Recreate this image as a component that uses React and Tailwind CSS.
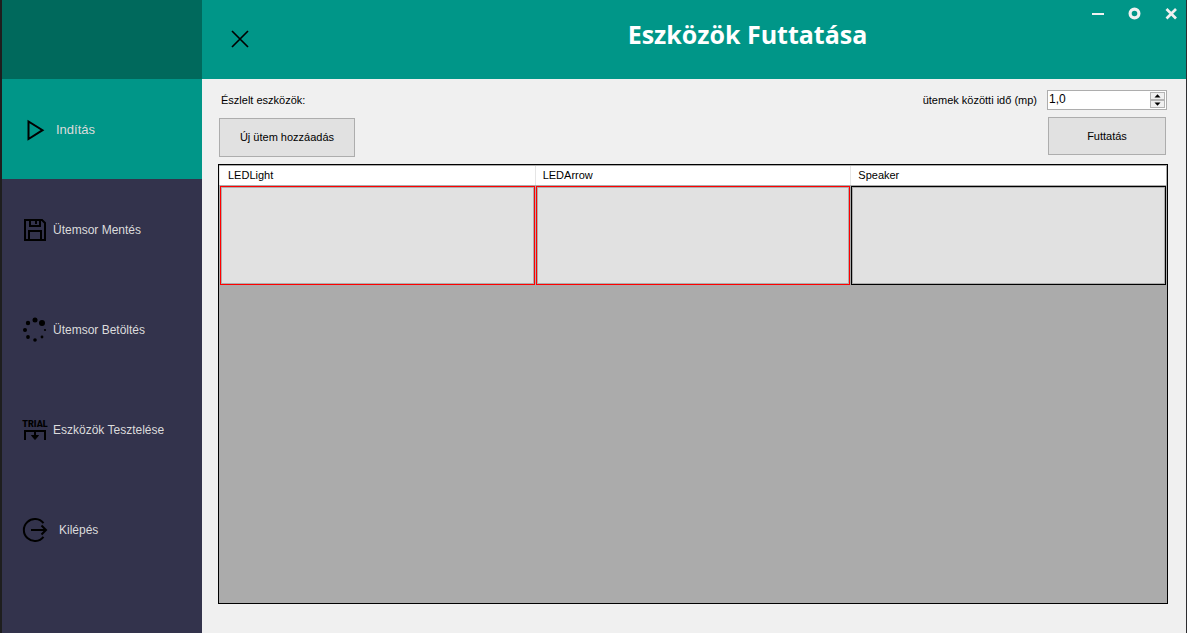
import { useState } from "react";

const PlayIcon = () => (
  <svg width="26" height="26" viewBox="0 0 26 26" fill="none" stroke="#000" strokeWidth="2" aria-hidden="true">
    <path d="M6.500 4.500v17.500L20.500 13.200z" />
  </svg>
);

const SaveIcon = () => (
  <svg width="26" height="26" viewBox="0 0 26 26" fill="none" stroke="#000" strokeWidth="2" aria-hidden="true">
    <path d="M3 3h17l3 3v17H3zM7 23v-9h12v9M8 3v6h10V3" />
    <path d="M14 4v3" />
  </svg>
);

const LoadIcon = () => (
  <svg width="26" height="26" viewBox="0 0 26 26" fill="#000" aria-hidden="true">
    <circle cx="13" cy="3" r="2.5" />
    <circle cx="20" cy="6" r="3" />
    <circle cx="6" cy="6" r="2.2" />
    <circle cx="3" cy="13" r="2" />
    <circle cx="6" cy="20" r="1.9" />
    <circle cx="13" cy="23" r="1.8" />
    <circle cx="20" cy="20" r="1.4" />
    <circle cx="23" cy="13" r="1.1" />
  </svg>
);

const TrialIcon = () => (
  <svg width="26" height="26" viewBox="0 0 26 26" fill="none" stroke="#000" strokeWidth="2" aria-hidden="true">
    <text x="13" y="10" textAnchor="middle" fill="#000" stroke="none" fontSize="9" fontWeight="900" fontFamily="Roboto, sans-serif">TRIAL</text>
    <path d="M3 23v-9h20v9M13 14v7" />
    <path d="M9.500 18.500h7l-3.500 4z" fill="#000" strokeWidth="1" />
  </svg>
);

const ExitIcon = () => (
  <svg width="26" height="26" viewBox="0 0 26 26" fill="none" stroke="#000" strokeWidth="2" aria-hidden="true">
    <path d="M21.500 6.200A11 11 0 1 0 21.500 19.800M9 13h15M19.500 8.500L24 13l-4.500 4.500" />
  </svg>
);

const items = [
  { label: "Indítás", Icon: PlayIcon, look: "bg-[#009688] gap-2 text-[13px]" },
  { label: "Ütemsor Mentés", Icon: SaveIcon, look: "gap-[5px] text-xs" },
  { label: "Ütemsor Betöltés", Icon: LoadIcon, look: "gap-[5px] text-xs" },
  { label: "Eszközök Tesztelése", Icon: TrialIcon, look: "gap-[5px] text-xs" },
  { label: "Kilépés", Icon: ExitIcon, look: "gap-[11px] text-xs" },
];

const devices = [
  { name: "LEDLight", border: "border-[#ff0000]" },
  { name: "LEDArrow", border: "border-[#ff0000]" },
  { name: "Speaker", border: "border-black" },
];

export default function App() {
  const [seconds, setSeconds] = useState("1,0");
  const step = (d) => {
    const next = Math.max(0, (parseFloat(seconds.replace(",", ".")) || 0) + d);
    setSeconds(next.toFixed(1).replace(".", ","));
  };

  return (
    <div className="flex h-screen border-l-2 border-r border-l-[#1e1e1e] border-r-[#2d2d30] bg-[#f0f0f0] font-['Liberation_Sans',Arial,sans-serif] text-[11px] text-black">
      <aside className="flex w-[200px] shrink-0 flex-col bg-[#33334c]">
        <div className="h-[79px] shrink-0 bg-[#00695c]" />
        <nav className="flex flex-col">
          {items.map(({ label, Icon, look }) => (
            <button key={label} className={`flex h-[100px] items-center pt-0.5 pl-5 text-[#dcdcdc] ${look}`}>
              <Icon />
              <span>{label}</span>
            </button>
          ))}
        </nav>
      </aside>

      <div className="flex min-w-0 flex-1 flex-col">
        <header className="flex h-[79px] shrink-0 items-start bg-[#009688]">
          <button aria-label="Bezárás" className="mt-7 ml-[27px]">
            <svg width="22" height="22" viewBox="0 0 22 22" stroke="#000" strokeWidth="1.7" aria-hidden="true">
              <path d="M3 3l16 16M19 3L3 19" />
            </svg>
          </button>
          <h1 className="flex-1 pt-4 pl-[154px] text-center font-['Open_Sans','Noto_Sans',sans-serif] text-[25px] leading-9 font-bold text-white">
            Eszközök Futtatása
          </h1>
          <div className="flex gap-[18px] pt-1 pr-1.5">
            <button aria-label="Kis méret">
              <svg width="18" height="20" viewBox="0 0 18 20" stroke="#f0f0f0" strokeWidth="2" aria-hidden="true">
                <path d="M2 10h12" />
              </svg>
            </button>
            <button aria-label="Teljes méret">
              <svg width="18" height="20" viewBox="0 0 18 20" fill="none" stroke="#f0f0f0" strokeWidth="3.2" aria-hidden="true">
                <circle cx="8.500" cy="9.500" r="4.400" />
              </svg>
            </button>
            <button aria-label="Kilépés a programból">
              <svg width="18" height="20" viewBox="0 0 18 20" stroke="#f0f0f0" strokeWidth="2.700" aria-hidden="true">
                <path d="M4.500 5l9.500 9.500M14 5L4.500 14.500" />
              </svg>
            </button>
          </div>
        </header>

        <main className="flex flex-1 flex-col pt-[11px] pr-[18px] pb-[29px] pl-4">
          <div className="flex justify-between pr-px pl-px">
            <div className="flex flex-col items-start gap-2">
              <h2 className="pl-0.5 leading-5">Észlelt eszközök:</h2>
              <button className="h-[39px] w-[136px] border border-[#adadad] bg-[#e1e1e1]">Új ütem hozzáadás</button>
            </div>
            <div className="flex flex-col items-end gap-[7px]">
              <div className="flex items-center">
                <label htmlFor="seconds" className="pr-2.5">ütemek közötti idő (mp)</label>
                <div className="flex h-5 w-[120px] border border-[#adadad] bg-white p-px">
                  <input
                    id="seconds"
                    type="text"
                    value={seconds}
                    onChange={(e) => setSeconds(e.target.value)}
                    className="h-3.5 min-w-0 flex-1 text-xs outline-none"
                  />
                  <div className="flex w-[15px] flex-col">
                    <button aria-label="Növelés" onClick={() => step(0.1)} className="flex flex-1 items-center justify-center border border-[#b4b4b4] bg-[#f0f0f0]">
                      <svg width="7" height="4" viewBox="0 0 7 4" aria-hidden="true"><path d="M0.500 3.500L3.500 0.300l3 3.200z" /></svg>
                    </button>
                    <button aria-label="Csökkentés" onClick={() => step(-0.1)} className="flex flex-1 items-center justify-center border border-[#b4b4b4] bg-[#f0f0f0]">
                      <svg width="7" height="4" viewBox="0 0 7 4" aria-hidden="true"><path d="M0.500 0.500L3.500 3.700l3-3.200z" /></svg>
                    </button>
                  </div>
                </div>
              </div>
              <button className="mr-px h-[38px] w-[118px] border border-[#adadad] bg-[#e1e1e1]">Futtatás</button>
            </div>
          </div>

          <div className="mt-[7px] flex-1 border border-black bg-[#ababab] pt-px pr-px">
            <table className="w-full table-fixed border-separate border-spacing-0">
              <thead>
                <tr className="bg-white">
                  {devices.map(({ name }) => (
                    <th key={name} className="h-[19px] border-l border-[#e5e5e5] p-0 pl-[7px] text-left font-normal first:pl-2">
                      {name}
                    </th>
                  ))}
                </tr>
              </thead>
              <tbody>
                <tr>
                  {devices.map(({ name, border }) => (
                    <td key={name} className="p-0 pt-px pl-px">
                      <button
                        aria-label={name}
                        className={`block h-[99px] w-full border bg-[#e1e1e1] shadow-[inset_0_0_0_1px_#adadad] ${border}`}
                      />
                    </td>
                  ))}
                </tr>
              </tbody>
            </table>
          </div>
        </main>
      </div>
    </div>
  );
}
